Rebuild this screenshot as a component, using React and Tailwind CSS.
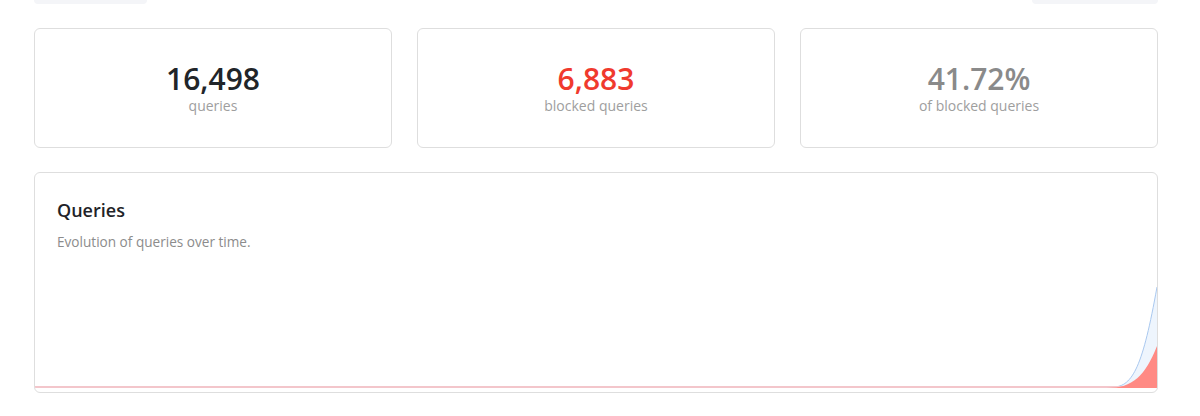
import React from 'react';

const font = { fontFamily: '"Open Sans", "Noto Sans", sans-serif' };

const stats = [
    { value: '16,498', label: 'queries', color: 'text-[#212529]' },
    { value: '6,883', label: 'blocked queries', color: 'text-[#f03a2e]' },
    { value: '41.72%', label: 'of blocked queries', color: 'text-[#8a8a8a]' },
];

const StatCard = ({ value, label, color }) => (
    <div className="h-[120px] pt-[3px] rounded-md border border-[#dedede] bg-white flex flex-col items-center justify-center">
        <div className={`text-[30px] leading-[30px] font-semibold ${color}`}>{value}</div>
        <div className="mt-[3px] text-[14px] leading-[18px] text-[#9e9e9e]">{label}</div>
    </div>
);

const QueriesChart = () => (
    <svg className="block w-full h-[130px]" viewBox="0 0 1122 130" preserveAspectRatio="none">
        <path d="M1078,127 C1098,127 1108,105 1122,27 L1122,127 Z" fill="#eef5fd" />
        <path d="M1078,127 C1098,127 1108,105 1122,27" fill="none" stroke="#a9c8ef" strokeWidth="1" />
        <line x1="0" y1="127" x2="1122" y2="127" stroke="#f3c6cb" strokeWidth="2" />
        <path d="M1072,128 C1098,128 1110,116 1122,86 L1122,128 Z" fill="#ff8a84" />
    </svg>
);

const App = () => {
    return (
        <div className="min-h-[416px] bg-white" style={font}>
            <div className="w-[1124px] ml-[34px]">
                {/* top controls, mostly scrolled out of view */}
                <div className="flex justify-between h-[4px] overflow-hidden">
                    <div className="w-[113px] h-[4px] rounded-b-md bg-[#f4f5f8]" />
                    <div className="w-[126px] h-[4px] rounded-b-md bg-[#f4f5f8]" />
                </div>

                <div className="grid grid-cols-3 gap-[25px] mt-[24px]">
                    {stats.map((s) => (
                        <StatCard key={s.label} {...s} />
                    ))}
                </div>

                <div className="mt-[24px] h-[221px] rounded-md border border-[#dedede] bg-white overflow-hidden flex flex-col">
                    <div className="px-[22px] pt-[25px]">
                        <h2 className="text-[18px] leading-[24px] font-semibold text-[#1f2328]">Queries</h2>
                        <p className="mt-[11px] text-[13.6px] leading-[18px] text-[#8c8c8c]">Evolution of queries over time.</p>
                    </div>
                    <div className="mt-auto pb-[2px]">
                        <QueriesChart />
                    </div>
                </div>
            </div>
        </div>
    );
};

export default App;
